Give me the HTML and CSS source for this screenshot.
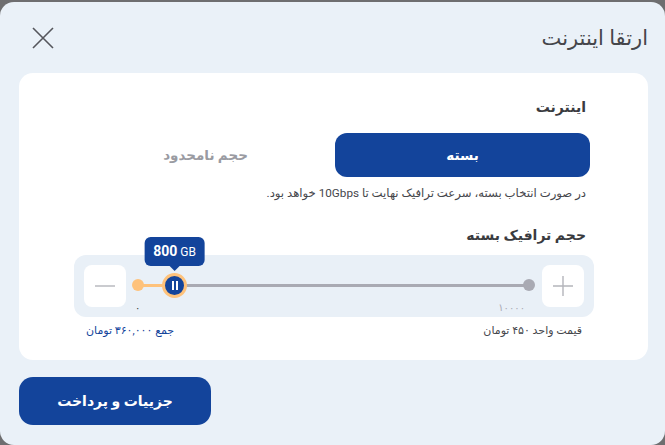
FILE: index.html
```html
<!DOCTYPE html>
<html lang="fa" dir="rtl">
<head>
  <meta charset="UTF-8" />
  <meta name="viewport" content="width=device-width, initial-scale=1.0" />
  <title>ارتقا اینترنت</title>
  <link rel="stylesheet" href="styles.css">
</head>
<body>

  <div class="dialog">
    <div class="dialog-head">
      <h2 class="dialog-title">ارتقا اینترنت</h2>
      <button class="close-btn" aria-label="بستن">
        <svg width="24" height="24" viewBox="0 0 24 24">
          <path d="M2 2 L22 22 M22 2 L2 22" stroke="#55565c" stroke-width="1.6" fill="none" />
        </svg>
      </button>
    </div>

    <div class="card">
      <div class="section-label">اینترنت</div>
      <div class="toggle">
        <button class="toggle-opt active">بسته</button>
        <button class="toggle-opt">حجم نامحدود</button>
      </div>
      <p class="hint">در صورت انتخاب بسته، سرعت ترافیک نهایت تا 10Gbps خواهد بود.</p>

      <div class="section-label traffic-label">حجم ترافیک بسته</div>
      <div class="slider-box">
        <button class="step-btn">
          <svg width="22" height="22" viewBox="0 0 22 22">
            <path d="M11 1 V21 M1 11 H21" stroke="#b4b5bb" stroke-width="1.4" fill="none" />
          </svg>
        </button>
        <div class="slider">
          <div class="track"></div>
          <div class="track-fill" style="width: 36px"></div>
          <span class="dot dot-max"></span>
          <span class="dot dot-min"></span>
          <span class="tick tick-min">۰</span>
          <span class="tick tick-max">۱۰۰۰۰</span>
          <div class="thumb" style="left: 36px">
            <div class="bubble"><b>800</b> GB</div>
          </div>
        </div>
        <button class="step-btn">
          <svg width="22" height="22" viewBox="0 0 22 22">
            <path d="M1 11 H21" stroke="#b4b5bb" stroke-width="1.4" fill="none" />
          </svg>
        </button>
      </div>
      <div class="price-row">
        <span class="unit-price">قیمت واحد ۴۵۰ تومان</span>
        <span class="total">جمع ۳۶۰,۰۰۰ تومان</span>
      </div>
    </div>

    <div class="actions">
      <button class="pay-btn">جزییات و پرداخت</button>
    </div>
  </div>

</body>
</html>
```

FILE: styles.css
```css
body {
  margin: 0;
  background: #6e6e70;
  font-family: Roboto, "DejaVu Sans", sans-serif;
  color: #3a3b40;
  overflow: hidden;
}

button {
  font-family: inherit;
  border: none;
  cursor: pointer;
}

.dialog {
  margin-top: 2px;
  height: 443px;
  background: #eaf1f8;
  border-radius: 14px;
  padding: 0 17px 0 19px;
  box-sizing: border-box;
}

.dialog-head {
  height: 71px;
  display: flex;
  align-items: center;
  justify-content: space-between;
}

.dialog-title {
  margin: 0;
  font-size: 21px;
  font-weight: normal;
  color: #45464b;
}

.close-btn {
  background: none;
  padding: 0;
  margin-left: 12px;
  display: flex;
}

.card {
  background: #fff;
  border-radius: 14px;
  height: 287px;
  padding: 22px 54px 0 55px;
  box-sizing: border-box;
}

.section-label {
  font-size: 14px;
  font-weight: bold;
  color: #3a3b40;
  padding-right: 8px;
  height: 24px;
  line-height: 24px;
}

.toggle {
  display: grid;
  grid-template-columns: 1fr 1fr;
  gap: 2px;
  margin: 14px 4px 0 4px;
}

.toggle-opt {
  height: 44px;
  border-radius: 12px;
  background: none;
  font-size: 13.5px;
  font-weight: bold;
  color: #9a9ba2;
}

.toggle-opt.active {
  background: #13449b;
  color: #fff;
}

.hint {
  margin: 8px 8px 0 0;
  font-size: 11.7px;
  color: #45464b;
  line-height: 16px;
}

.traffic-label {
  margin-top: 22px;
}

.slider-box {
  margin-top: 8px;
  height: 62px;
  background: #e9f0f7;
  border-radius: 12px;
  padding: 10px;
  box-sizing: border-box;
  display: flex;
  align-items: center;
}

.step-btn {
  width: 42px;
  height: 42px;
  background: #fff;
  border-radius: 8px;
  display: flex;
  align-items: center;
  justify-content: center;
  padding: 0;
}

.slider {
  flex: 1;
  align-self: stretch;
  margin: 0 13px 0 12px;
  position: relative;
  direction: ltr;
}

.track {
  position: absolute;
  left: 0;
  right: 0;
  top: 19px;
  height: 3px;
  background: #a9aab3;
}

.track-fill {
  position: absolute;
  left: 0;
  top: 19px;
  height: 3px;
  background: #fec27b;
}

.dot {
  position: absolute;
  top: 14px;
  width: 12px;
  height: 12px;
  border-radius: 50%;
}

.dot-min {
  left: -6px;
  background: #fec27b;
}

.dot-max {
  right: -6px;
  background: #a9aab3;
}

.tick {
  position: absolute;
  top: 37px;
  font-size: 10px;
  line-height: 12px;
  color: #3a3b40;
}

.tick-min {
  left: -3px;
}

.tick-max {
  right: 4px;
  color: #a9aab3;
}

.thumb {
  position: absolute;
  top: 8px;
  width: 19px;
  height: 19px;
  margin-left: -12px;
  border-radius: 50%;
  background: #13449b;
  border: 3px solid #fec27b;
  display: flex;
  align-items: center;
  justify-content: center;
}

.thumb::before {
  content: "";
  width: 2px;
  height: 9px;
  border-left: 2px solid #fff;
  border-right: 2px solid #fff;
}

.bubble {
  position: absolute;
  bottom: 29px;
  left: 50%;
  transform: translateX(-50%);
  background: #13449b;
  color: #fff;
  font-size: 12px;
  white-space: nowrap;
  padding: 0 9px;
  height: 29px;
  line-height: 29px;
  border-radius: 6px;
}

.bubble b {
  font-size: 14px;
}

.bubble::after {
  content: "";
  position: absolute;
  left: 50%;
  bottom: -5px;
  margin-left: -5px;
  border-left: 5px solid transparent;
  border-right: 5px solid transparent;
  border-top: 5px solid #13449b;
}

.price-row {
  display: flex;
  justify-content: space-between;
  margin: 7px 12px 0 12px;
  font-size: 11px;
  line-height: 14px;
}

.unit-price {
  color: #45464b;
}

.total {
  color: #13449b;
}

.actions {
  padding-top: 17px;
  display: flex;
  justify-content: flex-end;
}

.pay-btn {
  width: 192px;
  height: 48px;
  border-radius: 14px;
  background: #13449b;
  color: #fff;
  font-size: 14px;
  font-weight: bold;
}
```
